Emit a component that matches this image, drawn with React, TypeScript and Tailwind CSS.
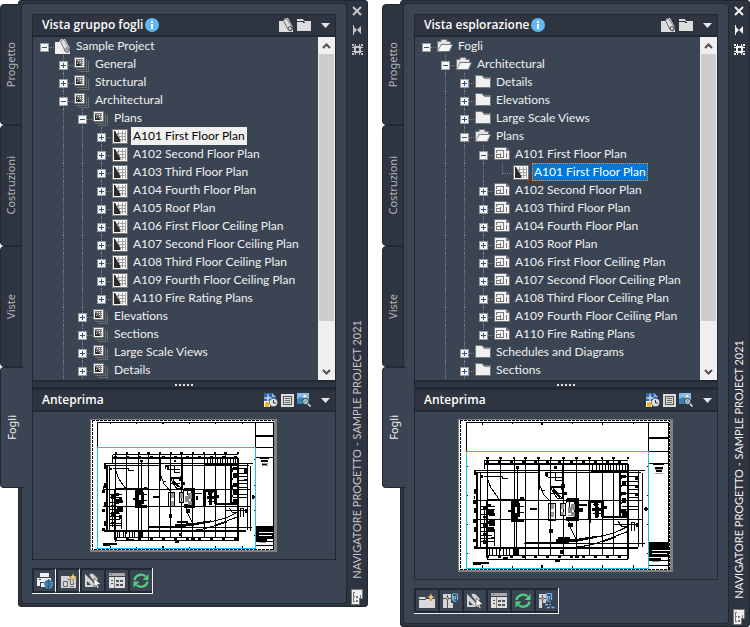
import { ReactNode } from 'react';
import clsx from 'clsx';

type IconKind = 'project' | 'subset' | 'sheet' | 'folder' | 'folderOpen' | 'drawing';

interface TreeRow {
  label: string;
  level: number;
  icon: IconKind;
  state?: 'open' | 'closed';
  last?: boolean;
  highlight?: 'inactive' | 'active';
}

const floorPlans = [
  'A102 Second Floor Plan',
  'A103 Third Floor Plan',
  'A104 Fourth Floor Plan',
  'A105 Roof Plan',
  'A106 First Floor Ceiling Plan',
  'A107 Second Floor Ceiling Plan',
  'A108 Third Floor Ceiling Plan',
  'A109 Fourth Floor Ceiling Plan',
  'A110 Fire Rating Plans',
];

const planRows = (icon: IconKind): TreeRow[] =>
  floorPlans.map((label, index) => ({
    label,
    level: 3,
    icon,
    state: 'closed',
    last: index === floorPlans.length - 1,
  }));

const sheetSetRows: TreeRow[] = [
  { label: 'Sample Project', level: 0, icon: 'project', state: 'open' },
  { label: 'General', level: 1, icon: 'subset', state: 'closed' },
  { label: 'Structural', level: 1, icon: 'subset', state: 'closed' },
  { label: 'Architectural', level: 1, icon: 'subset', state: 'open' },
  { label: 'Plans', level: 2, icon: 'subset', state: 'open' },
  { label: 'A101 First Floor Plan', level: 3, icon: 'sheet', state: 'closed', highlight: 'inactive' },
  ...planRows('sheet'),
  { label: 'Elevations', level: 2, icon: 'subset', state: 'closed' },
  { label: 'Sections', level: 2, icon: 'subset', state: 'closed' },
  { label: 'Large Scale Views', level: 2, icon: 'subset', state: 'closed' },
  { label: 'Details', level: 2, icon: 'subset', state: 'closed' },
];

const explorerRows: TreeRow[] = [
  { label: 'Fogli', level: 0, icon: 'folderOpen', state: 'open' },
  { label: 'Architectural', level: 1, icon: 'folderOpen', state: 'open' },
  { label: 'Details', level: 2, icon: 'folder', state: 'closed' },
  { label: 'Elevations', level: 2, icon: 'folder', state: 'closed' },
  { label: 'Large Scale Views', level: 2, icon: 'folder', state: 'closed' },
  { label: 'Plans', level: 2, icon: 'folderOpen', state: 'open' },
  { label: 'A101 First Floor Plan', level: 3, icon: 'drawing', state: 'open' },
  { label: 'A101 First Floor Plan', level: 4, icon: 'sheet', last: true, highlight: 'active' },
  ...planRows('drawing'),
  { label: 'Schedules and Diagrams', level: 2, icon: 'folder', state: 'closed' },
  { label: 'Sections', level: 2, icon: 'folder', state: 'closed' },
];

function TreeIcon({ kind }: { kind: IconKind }) {
  switch (kind) {
    case 'project':
      return (
        <svg viewBox="0 0 16 15" className="h-[15px] w-4">
          <path fill="#efefef" d="M0 3h4l2-3h4l5 9v6H0z" />
          <path fill="#dcdcdc" stroke="#666" strokeWidth=".8" d="M5.500 2.500Q6 .5 9 .5L14.500 9.500Q15.500 13 12 13.500L10 12z" />
          <circle cx="12" cy="11" r="2.200" fill="#dcdcdc" stroke="#555" strokeWidth=".9" />
          <circle cx="12" cy="11" r=".7" fill="#444" />
        </svg>
      );
    case 'subset':
      return (
        <svg viewBox="0 0 16 15" className="h-[15px] w-4" shapeRendering="crispEdges">
          <path fill="none" stroke="#6d6e6c" d="M12.500 2v10.500H2M14.500 4v10.500H5" />
          <path fill="#777" d="M0 0h11v11H0z" />
          <path fill="#f4f4f4" d="M1 1h9v9H1z" />
          <path fill="#777" d="M2 2h7v7H2z" />
          <path fill="#2b2b2b" d="M2 3l5 6H2z" />
          <path fill="#eee" d="M4 3h1v1H4zM6 3h1v1H6zM6 5h1v1H6zM8 3h1v1H8zM8 5h1v1H8zM8 7h1v1H8zM3 6h1v1H3z" />
        </svg>
      );
    case 'sheet':
      return (
        <svg viewBox="0 0 16 15" className="h-[15px] w-4" shapeRendering="crispEdges">
          <path fill="#747474" d="M0 0h16v15H0z" />
          <path fill="#f6f6f6" d="M1 1h14v13H1z" />
          <path fill="#a0a0a0" d="M2 2h12v11H2z" />
          <path fill="#fafafa" d="M4 2h2v2H4zM7 2h3v2H7zM11 2h2v2h-2zM7 5h3v2H7zM11 5h2v2h-2zM8 8h2v2H8zM11 8h2v2h-2zM9 11h1v2H9zM11 11h2v2h-2z" />
          <path fill="#2b2b2b" d="M2 2h1l5 9v2H2z" />
        </svg>
      );
    case 'folder':
      return (
        <svg viewBox="0 0 16 14" className="h-[14px] w-4" shapeRendering="crispEdges">
          <path fill="#777" d="M0 0h8l1 2h7v11H0z" />
          <path fill="#f0f0f0" d="M1 1h6l2 3h6v8H1z" />
          <path fill="#8a8a8a" d="M9 3h6v1H9z" />
        </svg>
      );
    case 'folderOpen':
      return (
        <svg viewBox="0 0 16 14" className="h-[14px] w-4">
          <path fill="#777" d="M0 2h3l1-2h6l1 2h3v3h2L13 13H0z" />
          <path fill="#e4e4e4" d="M1 3h3l1-2h4l1 2h3v2H4L1 11z" />
          <path fill="#f6f6f6" d="M4.500 6h10.500l-3 6H1z" />
        </svg>
      );
    case 'drawing':
      return (
        <svg viewBox="0 0 16 14" className="h-[14px] w-4" shapeRendering="crispEdges">
          <path fill="#777" d="M0 0h12l4 3v10H0z" />
          <path fill="#f4f4f4" d="M1 1h11v3h3v8H1z" />
          <path fill="#777" d="M2 3h8v8H2z" />
          <path fill="#f4f4f4" d="M3 4h6v6H7V6H3zM3 8h3v2H3z" />
          <path fill="#f4f4f4" d="M2 6h4v1H2z" />
          <path fill="#777" d="M12 6h1v5h-1z" />
        </svg>
      );
  }
}

function Expander({ open, label }: { open: boolean; label: string }) {
  return (
    <button
      type="button"
      aria-label={open ? `Collapse ${label}` : `Expand ${label}`}
      className="z-10 col-start-1 row-start-1 mb-[3px] block size-[9px] self-end justify-self-center"
    >
      <svg viewBox="0 0 9 9" className="block size-[9px]" shapeRendering="crispEdges">
        <path fill="#9a9a9a" d="M0 0h9v9H0z" />
        <path fill="#f7f7f7" d="M1 1h7v7H1z" />
        <path fill="#35508f" d="M2 4h5v1H2z" />
        {!open && <path fill="#35508f" d="M4 2h1v5H4z" />}
      </svg>
    </button>
  );
}

function Row({ row }: { row: TreeRow }) {
  const cells = Array.from({ length: row.level + 1 }, (_, i) => i);
  return (
    <li className="flex h-[18px] items-start pl-0.5" role="treeitem" aria-level={row.level + 1}>
      {cells.map((cell) => {
        const own = cell === row.level;
        return (
          <span key={cell} className="grid h-[18px] w-[19px] shrink-0 grid-cols-1 grid-rows-1">
            {cell > 0 && (
              <span
                className={clsx(
                  'col-start-1 row-start-1 w-px justify-self-center border-l border-dotted border-[#7b818b]',
                  own && row.last ? 'h-[11px]' : 'h-[18px]',
                )}
              />
            )}
            {own && (
              <span className="col-start-1 row-start-1 mb-[7px] w-[9px] self-end justify-self-end border-t border-dotted border-[#7b818b]" />
            )}
            {own && row.state && <Expander open={row.state === 'open'} label={row.label} />}
          </span>
        );
      })}
      <span className="ml-px flex h-[18px] w-[19px] shrink-0 items-center">
        <TreeIcon kind={row.icon} />
      </span>
      <span
        className={clsx(
          'h-[18px] px-0.5 text-xs leading-[18px] whitespace-nowrap',
          row.highlight === 'inactive' && 'bg-[#f0f0f0] text-black',
          row.highlight === 'active' && 'bg-[#0078d7] text-white outline outline-dotted -outline-offset-1 outline-[#ff8728]',
          !row.highlight && 'text-[#f0f0f0]',
        )}
      >
        {row.label}
      </span>
    </li>
  );
}

function Chevron({ up }: { up?: boolean }) {
  return (
    <svg viewBox="0 0 9 6" className="h-1.5 w-[9px]">
      <path fill="none" stroke="#505050" strokeWidth="2" d={up ? 'M1 5l3.500-3.500L8 5' : 'M1 1l3.500 3.500L8 1'} />
    </svg>
  );
}

function Scrollbar() {
  return (
    <div className="flex w-[17px] shrink-0 flex-col bg-[#f0f0f0]">
      <button type="button" aria-label="Scroll up" className="grid h-[17px] place-items-center">
        <Chevron up />
      </button>
      <div className="flex-1 px-px">
        <div className="h-[267px] bg-[#cdcdcd]" />
      </div>
      <button type="button" aria-label="Scroll down" className="grid h-[17px] place-items-center">
        <Chevron />
      </button>
    </div>
  );
}

function Caret() {
  return (
    <svg viewBox="0 0 9 5" className="h-[5px] w-[9px]">
      <path fill="#e6e6e6" d="M0 0h9L4.500 5z" />
    </svg>
  );
}

function SectionHeader({ title, info, icons }: { title: string; info?: boolean; icons: { label: string; icon: ReactNode }[] }) {
  return (
    <div className="flex h-[22px] items-center border-b-2 border-[#222831] bg-[#2e3440] pr-[5px] pl-[9px]">
      <h2 className="font-['Open_Sans',sans-serif] text-xs font-semibold whitespace-nowrap text-white">{title}</h2>
      {info && (
        <svg viewBox="0 0 14 14" className="ml-0.5 size-3.5" role="img" aria-label="Info">
          <circle cx="7" cy="7" r="7" fill="#62b9f8" />
          <path fill="#fff" d="M6 3h2v2H6zM6 6h2v5H6z" />
        </svg>
      )}
      <div className="ml-auto flex items-center gap-[3px]">
        {icons.map(({ label, icon }) => (
          <button key={label} type="button" aria-label={label} className="block">
            {icon}
          </button>
        ))}
        <button type="button" aria-label="Menu" className="ml-[7px] block">
          <Caret />
        </button>
      </div>
    </div>
  );
}

const viewIcons = [
  {
    label: 'Sheet set',
    icon: (
      <svg viewBox="0 0 15 14" className="h-3.5 w-[15px]">
        <path fill="#dcdcdc" d="M0 3h4l2-3h3l5 9v5H0z" />
        <path fill="#dcdcdc" stroke="#4a4f59" strokeWidth=".8" d="M4.500 2.500Q5 .5 7.500.5L13.500 9Q14 12.500 11.500 13L9 11.500z" />
        <circle cx="11" cy="10.500" r="1.900" fill="#dcdcdc" stroke="#333" strokeWidth=".9" />
      </svg>
    ),
  },
  {
    label: 'Folders',
    icon: (
      <svg viewBox="0 0 14 14" className="size-3.5" shapeRendering="crispEdges">
        <path fill="#dcdcdc" d="M0 1h5l2 2h7v10H0z" />
        <path fill="#2e3440" d="M0 3h6l2 1v1H7L5 4H0z" />
      </svg>
    ),
  },
];

const previewIcons = [
  {
    label: 'Drawing status',
    icon: (
      <svg viewBox="0 0 14 14" className="size-3.5">
        <path fill="#3166b0" d="M0 0h8l4 4v6H0z" />
        <path fill="#8db9e8" d="M8 0l4 4H8z" />
        <path stroke="#e8eef5" strokeWidth="1" d="M4 1v8M0 5h8" />
        <path fill="#3166b0" stroke="#fff" strokeWidth=".8" d="M3 4h2v2H3z" />
        <path fill="#fff" d="M0 8h6v6H0z" />
        <path fill="#f7b529" d="M1 9h4v5H1z" />
        <circle cx="9.500" cy="9.500" r="4.200" fill="#e3e3e3" stroke="#2e3440" strokeWidth=".6" />
        <path fill="none" stroke="#333" d="M9.500 7v3H12" />
      </svg>
    ),
  },
  {
    label: 'Details list',
    icon: (
      <svg viewBox="0 0 13 13" className="size-[13px]" shapeRendering="crispEdges">
        <path fill="#dcdcdc" d="M0 0h13v13H0z" />
        <path fill="#555" d="M2 2h9v9H2z" />
        <path fill="#dcdcdc" d="M3 3h7v7H3z" />
        <path fill="#666" d="M4 4h5v1H4zM4 6h5v1H4zM4 8h5v1H4z" />
      </svg>
    ),
  },
  {
    label: 'Preview',
    icon: (
      <svg viewBox="0 0 14 14" className="size-3.5">
        <path fill="#86bbe9" d="M0 0h12v11H0z" />
        <path fill="#3c83b5" d="M0 6l4-2 8 5v2H0z" />
        <circle cx="8" cy="3" r="1.500" fill="#fdf3b8" />
        <path stroke="#dcdcdc" strokeWidth="1.600" d="M10.500 10.500l3 3" />
        <circle cx="8.500" cy="8.500" r="3" fill="#7fa6bd" stroke="#333" />
        <circle cx="8.500" cy="8.500" r="2" fill="none" stroke="#dcdcdc" strokeWidth=".8" />
      </svg>
    ),
  },
];

function FloorPlan({ className }: { className: string }) {
  return (
    <svg
      viewBox="6 9 645 459"
      className={clsx('[&_path]:[vector-effect:non-scaling-stroke]', className)}
      shapeRendering="crispEdges"
      fill="none"
      stroke="#000"
      role="img"
      aria-label="A101 First Floor Plan"
    >
      <path fill="#808080" stroke="none" d="M6 9h645v459H6z" />
      <path fill="#fff" stroke="none" d="M9 12h633v450H9z" />
      <path strokeDasharray="3 1" d="M13 13h627v447H13z" />
      <path d="M31 106V20H638V460M577 20V460M577 106h61M577 142h61M577 432h61M577 447h61" />
      <path strokeWidth="2" d="M577 66h61" />
      <path d="M78 20v7M168 20v5M348 20v5M438 20v7M532 20v5M78 448v9M168 450v7M348 450v7M438 448v9M532 448v9M31 150h4M31 237h4M31 325h4M31 412h4M573 150h4M573 237h4M573 325h4M573 412h4" />
      <path strokeWidth="2" d="M257 20v6M257 446v11M564 278h12M570 272v12" />
      <path fill="#000" stroke="none" d="M579 378h60v45h-60z" />
      <path stroke="#fff" d="M588 402h50M588 411h46" />
      <path stroke="#000" d="M591 145h34M597 155h24M600 165h18M579 428h36" strokeWidth="2" />
      <path stroke="#999" d="M598 161h22M598 171h22M588 436h24" />

      {/* outer walls */}
      <path strokeWidth="2" d="M84 144H517M92 252H208M63 168V396M54 396H545M517 144V430M404 165H517M208 380H330" />
      <path strokeWidth="2" d="M92 252V420M491 170V304M438 304H517" />
      <path d="M72 168V394M92 418H517M548 165V392M84 132H517M54 163H567M54 169H250M322 169H554M54 250V240M52 254H560M52 311H560M84 132V160M92 429H517M205 382H566M559 170V394" />

      {/* column grid */}
      <path d="M95 127V432M133 127V405M174 127V420M208 127V430M247 127V420M284 127V420M322 127V420M361 127V420M400 127V420M438 127V420M473 127V420M184 150V250M182 315V420" />
      <path strokeWidth="2" d="M248 144V222M322 144V250M91 127h8M130 127h7M170 127h8M204 127h8M244 127h7M281 127h8M318 127h8M357 127h8M396 127h8M434 127h8M469 127h8M512 127h8" />
      <path strokeWidth="2" strokeDasharray="3 9" d="M90 139H517M90 422H517" />
      <path strokeWidth="2" strokeDasharray="5 14" d="M57 163V394" />

      {/* parking and stair ticks */}
      <path d="M410 145v18M420 145v18M429 145v18M447 145v18M456 145v18M464 145v18M482 145v18M491 145v18M500 145v18M508 145v18" />
      <path d="M100 398v20M108 398v20M121 398v18M130 398v20M142 398v18M151 398v20M160 398v18" />
      <path d="M517 180h33M517 196h33M517 208h33M517 221h33M517 233h33M517 245h33M517 270h33M517 280h33M499 180h18M499 196h18M499 208h18M499 233h18M499 270h18M499 280h18" />
      <path d="M72 270h44M72 280h44M72 296h36M72 323h44M72 335h36M72 347h42M72 357h36M72 368h44M72 377h44M116 340V390M84 270V380" />
      <path strokeWidth="4" strokeDasharray="3 3 5 6" d="M98 264V346M505 176V304" />
      <path strokeWidth="3" strokeDasharray="4 6 2 5" d="M110 282V372M84 270V384M494 178V300M542 180V240" />
      <path strokeWidth="3" strokeDasharray="3 16" d="M54 255V396" />

      {/* cores */}
      <path strokeWidth="3" d="M168 255V312H204M187 262V304M168 260H190M330 252H364V311H330M400 252V311M400 255H438V302M420 258V306M408 280H438" />
      <path d="M174 270H204M190 290H204M330 250V262M341 256V272M412 264H430M412 292H438M278 262H297V312H278zM313 262H329V298H313z" />
      <path fill="#000" stroke="none" d="M170 257h14v12h-14zM172 290h14v20h-14zM172 398h16v18h-16zM313 402h10v12h-10zM334 247h34v12h-34zM355 258h13v56h-13zM329 304h34v10h-34zM414 252h12v18h-12zM416 274h12v28h-12zM316 204h12v11h-12zM320 228h12v10h-12zM180 150h9v8h-9zM294 150h9v9h-9zM193 244h10v9h-10zM222 276h22v6h-22zM278 338h12v12h-12zM336 320h14v13h-14zM298 430h14v8h-14zM540 320h8v12h-8zM368 264h24v5h-24zM370 276h10v12h-10zM442 270h10v10h-10zM155 282h12v6h-12zM100 290h18v10h-18zM100 312h18v18h-18zM498 286h16v18h-16zM300 370h44v9h-44zM74 178h8v8h-8z" />
      <path stroke="#999" strokeWidth="3" strokeDasharray="5 3" d="M290 264V308M320 264V296" />
      <path stroke="#888" strokeWidth="4" strokeDasharray="6 2 4 2" d="M342 274V300M352 264V306" />

      {/* ramps and site lines */}
      <path d="M92 180L104 214L131 252M248 200L262 234L284 258" />
      <path d="M84 181H140V187H156M258 224H268M268 180V170H322M275 185H318M298 170V192H318M284 214H322V248H304L284 216V232H318M292 218L318 246" />
      <path strokeWidth="2" d="M284 214H318V222M290 222L312 244M268 170h6v14" />
      <path d="M300 382L360 376L420 364L470 352L498 340L517 330M350 395L400 388L440 376L490 356L517 346M526 346V318H536V346M473 325H545M487 316L497 332H517M337 312L345 340L358 364L362 380M402 312v8" />
      <path strokeWidth="2" d="M305 366H340V372H360M300 378H330M360 372L424 362M440 376L480 362" />
      <path strokeWidth="2" d="M50 440H98M50 444H76M140 426h16M356 424h12" />

      {/* viewport frame */}
      <path fill="#0cc5f7" stroke="none" d="M30 105H579V109H30zM30 455H579V459H30zM30 105H34V459H30zM575 105H579V459H575z" />
    </svg>
  );
}

const toolIcons: Record<string, ReactNode> = {
  publish: (
    <>
      <path fill="#f2f2f2" d="M3 0h9v4H3zM0 5h14v7h-2V9H3v4H0z" />
      <path fill="#f2f2f2" d="M4 10h6v4H4z" />
      <path fill="#3b4453" d="M2 6h2v1H2z" />
      <circle cx="11.500" cy="11" r="4.500" fill="#5ab0ee" />
      <path fill="none" stroke="#28536f" strokeWidth=".8" d="M7 11h9M11.500 6.500v9M8 8.800h7M8 13.200h7M11.500 6.500q-4 4.500 0 9M11.500 6.500q4 4.500 0 9" />
    </>
  ),
  newSheet: (
    <>
      <path fill="#d5d5d5" d="M0 3h15v12H0z" />
      <path fill="none" stroke="#6a6a6a" d="M2.500 8.500h4v5h-4zM6.500 6.500h3v5h3v-3M9 13.500h4" />
      <path fill="#fbd277" stroke="#6b5a32" strokeWidth=".5" d="M12 0l1.200 3 2.800 1-2.800 1.200L12 8l-1.200-2.800L8 4l2.800-1z" />
    </>
  ),
  newFolder: (
    <>
      <path fill="#d9d9d9" d="M0 4h6l1 2h9v9H0z" />
      <path fill="#4a515d" d="M0 6h7v1H0z" />
      <path fill="#fbd277" stroke="#6b5a32" strokeWidth=".5" d="M12 0l1.200 3 2.800 1-2.800 1.200L12 8l-1.200-2.800L8 4l2.800-1z" />
    </>
  ),
  select: (
    <>
      <path fill="#d5d5d5" d="M0 1l13 13H0z" />
      <path fill="#3b4453" d="M2 8l4 4H2z" />
      <path fill="#d5d5d5" stroke="#3b4453" strokeWidth=".7" d="M4 2Q5-.5 8 .5L13 5.500l-1 6-4-4z" />
      <path fill="#fff" stroke="#333" strokeWidth=".6" d="M9 5v9l2-2 1.500 3.500 1.500-.6-1.400-3.400H16z" />
    </>
  ),
  table: (
    <g shapeRendering="crispEdges">
      <path fill="#a9a9a9" d="M0 0h16v3H0z" />
      <path fill="#dedede" d="M0 4h16v11H0z" />
      <path fill="#555" d="M2 1h1v1H2zM2 7h2v1H2zM2 10h2v1H2zM7 7h3v2H7zM11 7h3v2h-3zM7 11h3v2H7zM11 11h3v2h-3z" />
      <path fill="#8a8a8a" d="M5 4h1v11H5z" />
    </g>
  ),
  refresh: (
    <>
      <path fill="none" stroke="#4fcf80" strokeWidth="2.200" d="M1.500 7A6.500 6 0 0 1 12.500 3.500M14.500 8.500A6.500 6 0 0 1 3.500 12" />
      <path fill="#4fcf80" d="M15.500 1v6H9.500zM.5 14.500V8.500h6z" />
    </>
  ),
  xref: (
    <>
      <path fill="#d5d5d5" d="M0 1h8v9h2v5H0z" />
      <path stroke="#555" d="M4.500 2v13M0 5.500h8" />
      <circle cx="4.500" cy="5.500" r="1.200" fill="#d5d5d5" stroke="#555" strokeWidth=".8" />
      <path fill="none" stroke="#6fb9e8" strokeWidth="1.200" d="M12.500 6.500V3.500h-2v2.500h2.500M14.500 7V1.500Q12 0 9.500 1.500V6.500Q11 9 13.500 8" />
    </>
  ),
  xrefPath: (
    <>
      <path fill="#d5d5d5" d="M0 1h7v9H4v5H0z" />
      <path stroke="#555" d="M3.500 2v13M0 5.500h7" />
      <circle cx="3.500" cy="5.500" r="1.200" fill="#d5d5d5" stroke="#555" strokeWidth=".8" />
      <path fill="none" stroke="#6fb9e8" strokeWidth="1.200" d="M10.500 6.500V3.500h-2v2.500h2.500M12.500 7V1Q10 0 7.500 1V7Q9 9 11.500 8" />
      <path fill="none" stroke="#6fb9e8" strokeWidth="1.500" strokeDasharray="3 1.500" d="M6 11.500h6M8 14.500h8" />
    </>
  ),
};

interface Tool {
  id: string;
  label: string;
  divider?: boolean;
}

function Toolbar({ tools }: { tools: Tool[] }) {
  return (
    <div className="mt-2 flex self-start border-r border-b border-[#f0f0f0]" role="toolbar">
      {tools.map(({ id, label, divider }) => (
        <button
          key={id}
          type="button"
          aria-label={label}
          className={clsx(
            'grid h-[25px] w-6 place-items-center border-y-2 border-l-2 border-[#222831] bg-[#3b4453]',
            divider && 'border-r border-r-[#f0f0f0]',
          )}
        >
          <svg viewBox="0 0 16 16" className="size-4">
            {toolIcons[id]}
          </svg>
        </button>
      ))}
    </div>
  );
}

const tabs = ['Progetto', 'Costruzioni', 'Viste', 'Fogli'];

function Tabs() {
  return (
    <div role="tablist" aria-orientation="vertical" className="z-10 mt-1 -mr-1.5 flex w-6 shrink-0 flex-col items-start">
      {tabs.map((tab) => {
        const active = tab === 'Fogli';
        return (
          <button
            key={tab}
            type="button"
            role="tab"
            aria-selected={active}
            className={clsx(
              'flex h-[121px] items-center justify-center rounded-l-sm border-y border-l border-[#222831] font-["Noto_Sans",sans-serif] text-[11px]',
              active ? 'w-6 bg-[#3b4453] text-[#f0f0f0]' : 'w-[22px] border-r bg-[#2e3440] text-[#b4b6ba]',
            )}
          >
            <span className="rotate-180 [writing-mode:vertical-rl]">{tab}</span>
          </button>
        );
      })}
    </div>
  );
}

function TitleBar({ active }: { active?: boolean }) {
  return (
    <div className={clsx('flex w-5 shrink-0 flex-col items-center pt-[5px] pb-px', active ? 'text-[#f2f2f2]' : 'text-[#c3c5c8]')}>
      <div className="flex flex-col items-center gap-[9px]">
        <button type="button" aria-label="Close" className="block">
          <svg viewBox="0 0 10 10" className="size-2.5" stroke="currentColor" strokeWidth="2">
            <path d="M1 1l8 8M9 1L1 9" />
          </svg>
        </button>
        <button type="button" aria-label="Auto-hide" className="block">
          <svg viewBox="0 0 10 10" className="size-2.5" fill="currentColor">
            <path d="M1 0h1v10H1zM2 2l3 3-3 3zM9 1v8L5 5z" />
          </svg>
        </button>
        <button type="button" aria-label="Properties" className="block">
          <svg viewBox="0 0 11 11" className="size-[11px]" fill="currentColor" shapeRendering="crispEdges">
            <path fillRule="evenodd" d="M2 2h7v7H2zM4 4v3h3V4z" />
            <path d="M3 0h1v2H3zM7 0h1v2H7zM3 9h1v2H3zM7 9h1v2H7zM0 3h2v1H0zM0 7h2v1H0zM9 3h2v1H9zM9 7h2v1H9zM0 0h2v2H0zM9 0h2v2H9zM0 9h2v2H0zM9 9h2v2H9z" />
          </svg>
        </button>
      </div>
      <h1 className="mt-auto rotate-180 text-[11px] whitespace-nowrap [writing-mode:vertical-rl]">
        NAVIGATORE PROGETTO - SAMPLE PROJECT 2021
      </h1>
      <svg viewBox="0 0 12 16" className="mt-2.5 h-4 w-3" shapeRendering="crispEdges">
        <path fill="#777" d="M0 0h12v10H9v6H0z" />
        <path fill="#f0f0f0" d="M1 1h10v8H8v6H1z" />
        <path fill="#777" d="M2 3h2v1H3v3h1v1H3v4h1v1H2zM5 7h2v2H5zM5 11h2v2H5zM9 6h1v3H9z" />
      </svg>
    </div>
  );
}

interface PaletteProps {
  title: string;
  rows: TreeRow[];
  tools: Tool[];
  active?: boolean;
  planClass: string;
}

function Palette({ title, rows, tools, active, planClass }: PaletteProps) {
  return (
    <section className="flex min-w-0">
      <Tabs />
      <div className="flex min-w-0 flex-1 rounded-[3px] border border-[#222831] bg-[#2e3440]">
        <div className="my-0.5 ml-0.5 flex min-w-0 flex-1 flex-col rounded border border-[#222831] bg-[#3b4453] px-2.5 pt-2.5 pb-[9px]">
          <div className="border border-[#222831]">
            <SectionHeader title={title} info icons={viewIcons} />
            <div className="flex justify-between">
              <ul role="tree" className="h-[343px] min-w-0 overflow-hidden">
                {rows.map((row, index) => (
                  <Row key={index} row={row} />
                ))}
              </ul>
              <Scrollbar />
            </div>
            <div className="flex h-2.5 items-center justify-center gap-0.5 border-t-2 border-b-3 border-[#222831] bg-[#2e3440]">
              {[0, 1, 2, 3, 4].map((dot) => (
                <span key={dot} className="size-0.5 bg-[#e6e6e6]" />
              ))}
            </div>
            <SectionHeader title="Anteprima" icons={previewIcons} />
            <div className="flex justify-center py-[7px] pr-px">
              <FloorPlan className={planClass} />
            </div>
          </div>
          <Toolbar tools={tools} />
        </div>
        <TitleBar active={active} />
      </div>
    </section>
  );
}

export default function App() {
  return (
    <main className="grid grid-cols-2 items-start gap-3.5 bg-white font-[Lato,sans-serif]">
      <Palette
        title="Vista gruppo fogli"
        rows={sheetSetRows}
        planClass="h-[133px] w-[187px]"
        tools={[
          { id: 'publish', label: 'Publish', divider: true },
          { id: 'newSheet', label: 'New sheet', divider: true },
          { id: 'select', label: 'Select layout' },
          { id: 'table', label: 'Sheet set view' },
          { id: 'refresh', label: 'Refresh' },
        ]}
      />
      <Palette
        title="Vista esplorazione"
        rows={explorerRows}
        planClass="h-[153px] w-[215px]"
        active
        tools={[
          { id: 'newFolder', label: 'New folder' },
          { id: 'xref', label: 'Attach xref' },
          { id: 'select', label: 'Select layout' },
          { id: 'table', label: 'Explorer view' },
          { id: 'refresh', label: 'Refresh' },
          { id: 'xrefPath', label: 'Repath xref' },
        ]}
      />
    </main>
  );
}
